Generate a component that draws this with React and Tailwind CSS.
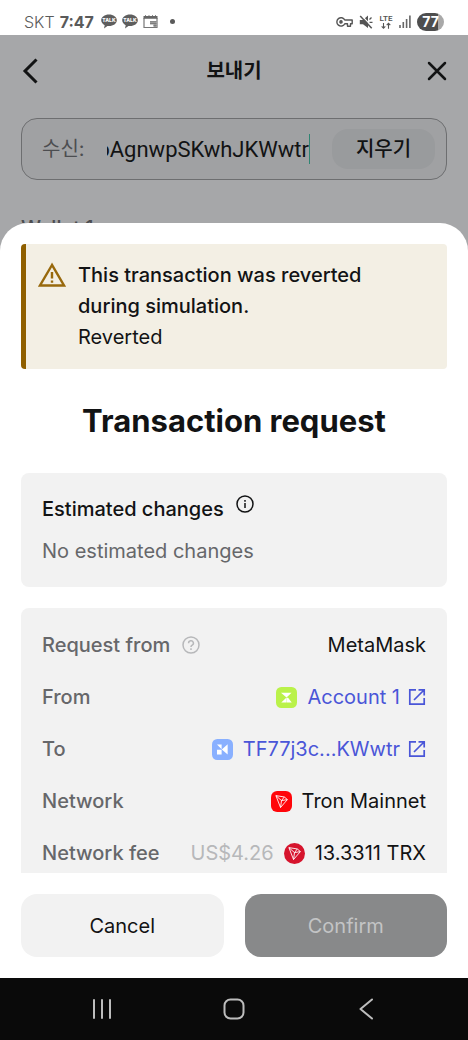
import { useState } from 'react'

const LATIN = "font-['Inter','Noto_Sans_CJK_KR',sans-serif]"

function TalkIcon() {
  return (
    <svg viewBox="0 0 16 15" className="w-4 h-[15px]" aria-hidden="true">
      <path d="M8 0.5C3.6 0.5 0.2 3 0.2 6.3c0 2.100 1.400 3.900 3.500 4.900L3 14.500l3.400-2.500c.5.1 1 .1 1.600.1 4.400 0 7.800-2.500 7.800-5.800S12.400.5 8 .5z" fill="#5e5e5e" />
      <text x="8" y="8.300" textAnchor="middle" fontSize="5" fontWeight="800" fill="#fff" fontFamily="Inter, sans-serif">TALK</text>
    </svg>
  )
}

function CalendarIcon() {
  return (
    <svg viewBox="0 0 15 14" className="w-[15px] h-[14px]" aria-hidden="true">
      <path d="M1 3v9.500h13V3" fill="none" stroke="#777" strokeWidth="1.200" />
      <path d="M0.500 1h1.500V0.300h1V1h2.500V0.300h1V1h2.500V0.300h1V1H12V0.300h1V1h1.500v2.800h-14z" fill="#666" />
      <path d="M7 6.500h6.500v5.500H10.500V9.500H7z" fill="#999" />
      <path d="M7 6.500h6.500M7 8.500h6.500M10.500 10.500h3" stroke="#777" strokeWidth="0.800" />
    </svg>
  )
}

function StatusIcons() {
  return (
    <div className="flex items-center gap-[6px]">
      <svg viewBox="0 0 17 12" className="w-[17px] h-3" fill="none" stroke="#555" strokeWidth="1.400" aria-hidden="true">
        <path d="M8.800 4h7.400v3.800h-1.700v2.400h-3V7.800H8.800a4.200 4.200 0 1 1 0-3.800z" strokeLinejoin="round" />
        <circle cx="5" cy="5.900" r="1.100" fill="#555" />
      </svg>
      <svg viewBox="0 0 14 14" className="w-[14px] h-[14px]" aria-hidden="true">
        <path d="M0.800 5h3l5.200-4.500v12.500l-5-3.800H0.800z" fill="#555" />
        <path d="M10.500 4.500l2-2M10.500 7.300h3" stroke="#555" strokeWidth="1.300" />
        <path d="M2.500 0.500l11 11.500" stroke="#fff" strokeWidth="1.200" />
        <path d="M1.200 1l11.500 12.300" stroke="#555" strokeWidth="1.500" />
      </svg>
      <svg viewBox="0 0 14 16" className="w-[14px] h-4" aria-hidden="true">
        <text x="7" y="7" textAnchor="middle" fontSize="8" fontWeight="600" fill="#555" fontFamily="Roboto, sans-serif">LTE</text>
        <path d="M4.500 9v5M2.700 12.400l1.800 1.900 1.800-1.900M9.500 14.800V9.500M7.700 11.200l1.800-1.900 1.800 1.900" fill="none" stroke="#555" strokeWidth="1.100" />
      </svg>
      <svg viewBox="0 0 12 13" className="w-3 h-[13px]" stroke="#666" strokeWidth="1.600" aria-hidden="true">
        <path d="M1 10v3M4.300 7v6M7.600 4v9M10.900 0.500v12.500" />
      </svg>
      <div className="w-[27px] h-[18px] rounded-full bg-linear-to-r from-[#4e4e4e] from-78% to-[#a9a9a9] to-78% text-white text-sm font-bold flex items-center justify-center">
        77
      </div>
    </div>
  )
}

function ExternalIcon() {
  return (
    <svg viewBox="0 0 18 18" className="w-[18px] h-[18px] shrink-0" fill="none" stroke="#4a56d8" strokeWidth="1.700" aria-hidden="true">
      <path d="M8 1.800H1.800v14.400h14.400V10" />
      <path d="M10.500 1.800h5.700v5.700M16 2L6 12" />
    </svg>
  )
}

function GreenAvatar() {
  return (
    <svg viewBox="0 0 24 24" className="w-[21px] h-[21px] shrink-0" aria-hidden="true">
      <rect width="24" height="24" rx="6" fill="#baf24a" />
      <path d="M5.700 6.500H17.800L12 12z" fill="#fff" />
      <path d="M12 12L6 17.600h6zM12.300 12.300h1.500l4.200 5.300h-5.700z" fill="#fff" />
    </svg>
  )
}

function BlueAvatar() {
  return (
    <svg viewBox="0 0 24 24" className="w-[21px] h-[21px] shrink-0" aria-hidden="true">
      <rect width="24" height="24" rx="6" fill="#89b0ff" />
      <path d="M5.700 6.200H11v5.400zM5.700 12.300H11v5.300H5.700zM11.200 12l6.700-5.900v11.700z" fill="#fff" />
    </svg>
  )
}

function TronIcon({ round }) {
  return (
    <svg viewBox="0 0 24 24" className="w-[21px] h-[21px] shrink-0" aria-hidden="true">
      <rect width="24" height="24" rx={round ? 12 : 7} fill={round ? '#d6142d' : '#ff060a'} />
      <path
        d="M5.600 5.300L15.200 6.800L18.700 9.800L10.900 18.900zM5.600 5.300L12 11L18.700 9.800M12 11L10.900 18.900M12 11L15.200 6.800"
        fill="none" stroke="#fff" strokeWidth="1" strokeLinejoin="round"
      />
    </svg>
  )
}

function Row({ label, hint, children }) {
  return (
    <div className="flex items-center justify-between h-[52px]">
      <dt className="flex items-center gap-3 font-medium text-[#66676a]">{label}{hint}</dt>
      <dd className="flex items-center text-[#121314]">{children}</dd>
    </div>
  )
}

export default function App() {
  const [address, setAddress] = useState('oAgnwpSKwhJKWwtr')

  return (
    <div className={`h-dvh flex flex-col bg-[#a6a7a9] text-xl text-[#121314] ${LATIN}`}>

      {/* Status bar */}
      <div className="h-[35px] shrink-0 bg-white px-6 pt-2 flex items-center justify-between text-[#5a5a5a]">
        <div className="flex items-center gap-[5px] text-base">
          <span className="font-light">SKT</span>
          <span className="font-bold mr-[2px]">7:47</span>
          <TalkIcon />
          <TalkIcon />
          <CalendarIcon />
          <span className="w-[5px] h-[5px] rounded-full bg-[#5a5a5a] ml-[7px]" />
        </div>
        <StatusIcons />
      </div>

      {/* Dimmed send screen */}
      <div className="h-[188px] shrink-0 overflow-hidden px-[21px]">
        <header className="h-[72px] flex items-center justify-between">
          <button aria-label="Back" className="w-5">
            <svg viewBox="0 0 20 28" className="w-5 h-7" fill="none" stroke="#121314" strokeWidth="3">
              <path d="M15.500 2.500L4 14l11.500 11.500" />
            </svg>
          </button>
          <h1 className="font-bold">보내기</h1>
          <button aria-label="Close" className="w-5">
            <svg viewBox="0 0 20 20" className="w-5 h-5" fill="none" stroke="#121314" strokeWidth="2.500" strokeLinecap="round">
              <path d="M2 2l16 16M18 2L2 18" />
            </svg>
          </button>
        </header>
        <div className="mt-[11px] h-[62px] border border-[#6d6e70] rounded-2xl bg-[#a0a1a3] pl-5 pr-[11px] flex items-center">
          <label htmlFor="recipient" className="text-[#4c4d50] shrink-0">수신:</label>
          <div className="ml-[22px] pt-[2px] flex-1 flex justify-end overflow-hidden">
            <input
              id="recipient"
              value={address}
              onChange={e => setAddress(e.target.value)}
              className="w-[240px] shrink-0 text-right text-[22px] outline-none font-['Roboto',sans-serif]"
            />
          </div>
          <span className="w-px h-[30px] bg-[#2f8573]" />
          <button className="ml-[22px] w-[103px] h-10 shrink-0 rounded-2xl bg-[#999b9d] font-medium">지우기</button>
        </div>
        <p className="mt-[34px] font-medium text-[#4c4d50]">Wallet 1</p>
      </div>

      {/* Confirmation sheet, its corners let the dimmed screen through */}
      <main className="flex-1 min-h-0 flex flex-col bg-white rounded-t-[28px]">
        <div className="mt-[21px] flex-1 min-h-0 overflow-y-auto [scrollbar-width:none] px-[21px]">
          <div role="alert" className="flex rounded border-l-[5px] border-[#8f5f00] bg-[#f3efe4] py-4 pl-3 pr-10 leading-[31px]">
            <svg viewBox="0 0 28 25" className="w-7 h-[25px] mt-[2px] mr-3 shrink-0" fill="none" stroke="#98690d" strokeWidth="2.400" aria-hidden="true">
              <path d="M14 3L2 23.500h24z" />
              <path d="M14 10v6.500M14 18.500v2.300" />
            </svg>
            <div>
              <p className="font-medium">This transaction was reverted during simulation.</p>
              <p>Reverted</p>
            </div>
          </div>

          <h2 className="my-8 text-center text-[31px] leading-10 font-bold">Transaction request</h2>

          <section className="h-[114px] rounded-lg bg-[#f2f2f2] px-[21px] pt-5">
            <div className="flex items-start gap-3">
              <h3 className="font-medium leading-8">Estimated changes</h3>
              <svg viewBox="0 0 18 18" className="w-[18px] h-[18px] mt-[2px]" fill="none" stroke="#121314" strokeWidth="1.500" aria-hidden="true">
                <circle cx="9" cy="9" r="8" />
                <path d="M9 8v5M9 5v1.700" />
              </svg>
            </div>
            <p className="mt-[10px] leading-8 text-[#66676a]">No estimated changes</p>
          </section>

          <dl className="mt-[21px] py-[11px] rounded-lg bg-[#f2f2f2] px-[21px]">
            <Row
              label="Request from"
              hint={
                <svg viewBox="0 0 18 18" className="w-[18px] h-[18px]" fill="none" stroke="#b7b8ba" strokeWidth="1.500" aria-hidden="true">
                  <circle cx="9" cy="9" r="8" />
                  <path d="M6.600 7.200a2.400 2.400 0 1 1 3.600 2c-.8.500-1.200.9-1.200 1.700M9 12.300v1.700" />
                </svg>
              }
            >
              MetaMask
            </Row>
            <Row label="From">
              <GreenAvatar />
              <a href="#account" className="ml-[10px] flex items-center gap-2 text-[#4a56d8]">Account 1 <ExternalIcon /></a>
            </Row>
            <Row label="To">
              <BlueAvatar />
              <a href="#recipient-account" className="ml-[10px] flex items-center gap-2 text-[#4a56d8]">TF77j3c...KWwtr <ExternalIcon /></a>
            </Row>
            <Row label="Network">
              <TronIcon />
              <span className="ml-[10px]">Tron Mainnet</span>
            </Row>
            <Row label="Network fee">
              <span className="mr-[10px] text-[#b7b8ba]">US$4.26</span>
              <TronIcon round />
              <span className="ml-[10px]">13.3311 TRX</span>
            </Row>
          </dl>
        </div>

        <div className="px-[21px] py-[21px] grid grid-cols-2 gap-[21px]">
          <button className="h-[63px] rounded-2xl bg-[#f2f2f2]">Cancel</button>
          <button disabled className="h-[63px] rounded-2xl bg-[#88898a] text-[#c3c4c5]">Confirm</button>
        </div>
      </main>

      {/* System navigation */}
      <nav className="h-[62px] shrink-0 px-9 bg-[#0a0a0a] grid grid-cols-3 items-center justify-items-center">
        <button aria-label="Recent apps">
          <svg viewBox="0 0 20 22" className="w-5 h-[22px]" stroke="#bdbdbd" strokeWidth="2" strokeLinecap="round">
            <path d="M2 2v18M10 2v18M18 2v18" />
          </svg>
        </button>
        <button aria-label="Home">
          <svg viewBox="0 0 22 22" className="w-[22px] h-[22px]" fill="none" stroke="#bdbdbd" strokeWidth="2">
            <rect x="1.500" y="1.500" width="19" height="19" rx="6" />
          </svg>
        </button>
        <button aria-label="Go back">
          <svg viewBox="0 0 14 22" className="w-[14px] h-[22px]" fill="none" stroke="#bdbdbd" strokeWidth="2" strokeLinecap="round" strokeLinejoin="round">
            <path d="M13 1.500L1.500 11L13 20.500" />
          </svg>
        </button>
      </nav>
    </div>
  )
}
